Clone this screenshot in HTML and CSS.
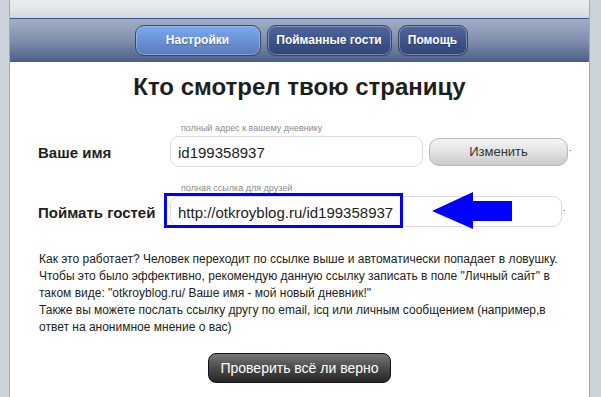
FILE: index.html
```html
<!DOCTYPE html>
<html lang="ru">
<head>
    <meta charset="UTF-8">
    <title>Кто смотрел твою страницу</title>
    <link rel="stylesheet" href="styles.css">
</head>
<body>
    <div class="page">
        <div class="top"></div>
        <div class="nav">
            <a class="nav-btn active btn-settings">Настройки</a>
            <a class="nav-btn btn-guests">Пойманные гости</a>
            <a class="nav-btn btn-help">Помощь</a>
        </div>

        <div class="content">
            <h1>Кто смотрел твою страницу</h1>

            <div class="row first">
                <div class="label">Ваше имя</div>
                <div class="field">
                    <div class="hint">полный адрес к вашему дневнику</div>
                    <div class="line">
                        <input class="text-input short" type="text" value="id199358937">
                        <button class="grey-btn">Изменить</button>
                        <span class="dot">.</span>
                    </div>
                </div>
            </div>

            <div class="row">
                <div class="label">Поймать гостей</div>
                <div class="field">
                    <div class="hint">полная ссылка для друзей</div>
                    <div class="line mark">
                        <input class="text-input long" type="text" value="http://otkroyblog.ru/id199358937">
                        <span class="dot">.</span>
                        <!-- annotation drawn over the field -->
                        <div class="blue-box"></div>
                        <svg class="arrow" width="80" height="38" viewBox="0 0 80 38">
                            <polygon points="0,19 41,0 41,9 80,9 80,29 41,29 41,37" fill="#0000ff"/>
                        </svg>
                    </div>
                </div>
            </div>

            <p class="info">
                Как это работает? Человек переходит по ссылке выше и автоматически попадает в ловушку.<br>
                Чтобы это было эффективно, рекомендую данную ссылку записать в поле "Личный сайт" в таком виде: "otkroyblog.ru/ Ваше имя - мой новый дневник!"<br>
                Также вы можете послать ссылку другу по email, icq или личным сообщением (например,в ответ на анонимное мнение о вас)
            </p>

            <div class="check">
                <button class="dark-btn">Проверить всё ли верно</button>
            </div>
        </div>
    </div>
</body>
</html>
```

FILE: styles.css
```css
body {
    margin: 0;
    padding: 0;
    background-color: #cdd3da;
    font-family: "Liberation Sans", Arial, sans-serif;
    color: #222;
}
.page {
    margin-left: 9px;
    width: 579px;
    min-height: 397px;
    background-color: #fff;
    border-left: 1px solid #a3abb8;
    border-right: 1px solid #a3abb8;
}
.top {
    height: 17px;
    background: linear-gradient(#e9edf1, #e3e7ea 50%, #d6dbde);
    border-bottom: 1px solid #cdd8cc;
}
.nav {
    height: 43px;
    border-top: 1px solid #3d5394;
    background: linear-gradient(#a2afc4, #7f8fad 50%, #4b5f89);
    display: flex;
    justify-content: center;
    align-items: center;
    gap: 6px;
    padding-left: 3px;
}
.nav-btn {
    box-sizing: border-box;
    height: 31px;
    line-height: 29px;
    text-align: center;
    color: #fff;
    font-size: 12px;
    font-weight: bold;
    border: 1px solid #3a4663;
    border-radius: 9px;
    box-shadow: inset 0 0 0 1px rgba(200, 210, 230, 0.45);
    background: linear-gradient(#4f66a0, #2f4476);
    text-shadow: 0 1px 1px rgba(0,0,0,0.3);
}
.nav-btn.active {
    background: linear-gradient(#7aa8f0, #5a7cbc);
}
.btn-settings { width: 126px; }
.btn-guests { width: 125px; }
.btn-help { width: 70px; }

.content {
    padding: 0 0 14px 0;
}
h1 {
    margin: 11px 0 0 0;
    font-size: 24px;
    line-height: 28px;
    text-align: center;
    color: #1e1e1e;
}
.row {
    display: flex;
    align-items: flex-end;
    margin-top: 16px;
}
.row.first {
    margin-top: 22px;
}
.label {
    width: 132px;
    padding-left: 28px;
    height: 31px;
    line-height: 33px;
    font-size: 15px;
    font-weight: bold;
    color: #222;
}
.hint {
    font-size: 9px;
    line-height: 11px;
    color: #8a8a8a;
    padding-left: 11px;
    margin-bottom: 2px;
}
.line {
    display: flex;
    align-items: center;
}
.line.mark {
    position: relative;
}
.text-input {
    box-sizing: border-box;
    height: 31px;
    border: 1px solid #dcdcdc;
    border-radius: 9px;
    padding: 2px 0 0 7px;
    font-family: "Liberation Sans", Arial, sans-serif;
    font-size: 15px;
    color: #222;
    background: #fff;
}
.text-input.short { width: 253px; }
.text-input.long { width: 392px; }
.grey-btn {
    box-sizing: border-box;
    width: 139px;
    height: 28px;
    margin-left: 6px;
    border: 1px solid #b9b9b9;
    border-radius: 10px;
    background: linear-gradient(#f4f4f4, #e2e2e2 50%, #c9c9c9);
    font-family: "Liberation Sans", Arial, sans-serif;
    font-size: 13px;
    color: #333;
}
.dot {
    font-size: 9px;
    color: #333;
    margin: -8px 0 0 1px;
}
.blue-box {
    position: absolute;
    left: -6px;
    top: -3px;
    width: 233px;
    height: 29px;
    border: 3px solid #0000ff;
}
.arrow {
    position: absolute;
    left: 262px;
    top: -4px;
}
.info {
    margin: 24px 0 0 0;
    padding: 0 20px 0 29px;
    font-size: 12px;
    line-height: 17px;
    color: #222;
}
.check {
    text-align: center;
    margin-top: 17px;
}
.dark-btn {
    box-sizing: border-box;
    width: 183px;
    height: 30px;
    border: 1px solid #111;
    border-radius: 8px;
    background: linear-gradient(#777, #4a4a4a 50%, #262626);
    color: #fff;
    font-family: "Liberation Sans", Arial, sans-serif;
    font-size: 14px;
}
```
